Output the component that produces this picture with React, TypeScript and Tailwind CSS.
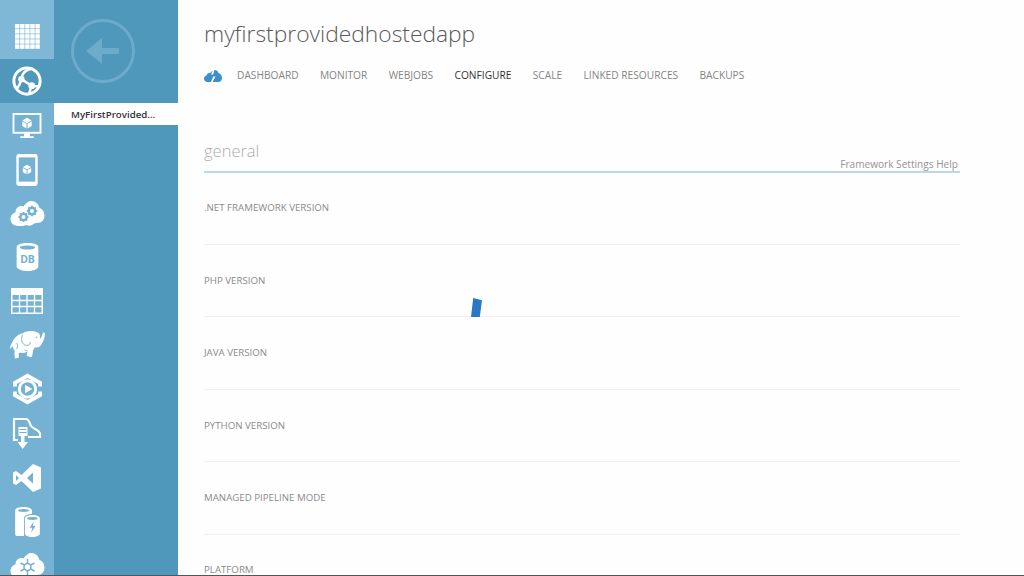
import React from "react";

const font = { fontFamily: '"Open Sans", "Noto Sans", sans-serif' };

const BLUE = "#74b1d2";

const Cube = ({ cx, cy, r, fill }: { cx: number; cy: number; r: number; fill: string }) => (
  <g>
    <path d={`M${cx} ${cy - r}L${cx + r * 0.87} ${cy - r * 0.5}L${cx} ${cy}L${cx - r * 0.87} ${cy - r * 0.5}Z`} fill={fill} />
    <path d={`M${cx - r * 0.87} ${cy - r * 0.32}L${cx - r * 0.1} ${cy + r * 0.12}V${cy + r}L${cx - r * 0.87} ${cy + r * 0.52}Z`} fill={fill} />
    <path d={`M${cx + r * 0.87} ${cy - r * 0.32}L${cx + r * 0.1} ${cy + r * 0.12}V${cy + r}L${cx + r * 0.87} ${cy + r * 0.52}Z`} fill={fill} />
  </g>
);

const GridIcon = () => (
  <svg width="25" height="25" viewBox="0 0 26 26" fill="#fff">
    {[0, 5.3, 10.6, 15.9, 21.2].flatMap((y) =>
      [0, 5.3, 10.6, 15.9, 21.2].map((x) => <rect key={`${x}-${y}`} x={x} y={y} width="4.6" height="4.6" />)
    )}
  </svg>
);

const GlobeIcon = () => (
  <svg width="30" height="30" viewBox="0 0 32 32" fill="none" stroke="#fff">
    <circle cx="16" cy="16" r="14" strokeWidth="3.2" />
    <path d="M21 3C15 4 11 8 10 13M10 14C9 18 8 22 4 25M10 14l11 7M21 21l9 1M21 21c-1 3-2 6-3 9" strokeWidth="2.6" />
    <circle cx="10" cy="14" r="3.4" fill="#fff" stroke="none" />
    <circle cx="21" cy="21" r="3.6" fill="#fff" stroke="none" />
  </svg>
);

const MonitorIcon = () => (
  <svg width="30" height="27" viewBox="0 0 30 28">
    <rect x="1" y="1" width="28" height="19.5" fill="none" stroke="#fff" strokeWidth="2" />
    <path d="M12 21h6v3h4v2H8v-2h4z" fill="#fff" />
    <Cube cx={15} cy={10.5} r={5.6} fill="#fff" />
  </svg>
);

const PhoneIcon = () => (
  <svg width="22" height="32" viewBox="0 0 22 33">
    <rect x="0" y="0" width="22" height="33" rx="2.5" fill="#fff" />
    <rect x="2.5" y="3.5" width="17" height="25" fill={BLUE} />
    <Cube cx={11} cy={16} r={5} fill="#fff" />
  </svg>
);

const CloudShape = ({ children, w, h }: { children?: React.ReactNode; w: number; h: number }) => (
  <svg width={w} height={h} viewBox="0 0 34 26">
    <path
      d="M8 25C3 25 0 22 0 18c0-3 2-6 5-6.500C5 7 9 4 13 5.500 15 2 18 0 21 0c4 0 7 3 8 7 3 1 5 4 5 7.500C34 19 31 22 27 22c-2 0-3 0-4 1-2 2-5 2-7 1-2 1-5 1-8 1z"
      fill="#fff"
    />
    {children}
  </svg>
);

const Gear = ({ cx, cy, r }: { cx: number; cy: number; r: number }) => (
  <g>
    <circle cx={cx} cy={cy} r={r * 0.68} fill="none" stroke={BLUE} strokeWidth={r * 0.5} />
    {[0, 45, 90, 135].map((a) => (
      <rect
        key={a}
        x={cx - r * 0.18}
        y={cy - r * 1.1}
        width={r * 0.36}
        height={r * 2.2}
        fill={BLUE}
        transform={`rotate(${a} ${cx} ${cy})`}
      />
    ))}
    <circle cx={cx} cy={cy} r={r * 0.42} fill="#fff" />
  </g>
);

const DbIcon = () => (
  <svg width="23" height="28" viewBox="0 0 24 31">
    <path d="M0 4.500C0 1.500 6 0 12 0s12 1.500 12 4.500V26c0 3-6 5-12 5S0 29 0 26z" fill="#fff" />
    <ellipse cx="12" cy="5" rx="8.500" ry="2.300" fill={BLUE} />
    <text x="12" y="22" textAnchor="middle" fontSize="11.5" fontWeight="700" fill={BLUE} fontFamily="Open Sans, sans-serif">
      DB
    </text>
  </svg>
);

const TableIcon = () => (
  <svg width="32" height="26" viewBox="0 0 32 26" fill="none" stroke="#fff">
    <rect x="0" y="0" width="32" height="7" fill="#fff" stroke="none" />
    <rect x="0.750" y="0.750" width="30.500" height="24.500" strokeWidth="1.500" />
    <path d="M1 12.500h30M1 18.500h30M8.500 7v18M16 7v18M23.500 7v18" strokeWidth="1.300" />
  </svg>
);

const ElephantIcon = () => (
  <svg width="35" height="30" viewBox="0 0 36 30">
    <path
      d="M2 13C4 8 8 4 13 3 17 0 24 0 28 2 31 3 31 6 31 9 32 8 33 5 34 2L36 3C36 8 34 13 31 16 29 18 27 18 26 17L24 20 23 25C23 27 22 28 20 27L17 26 18 22C14 24 11 23 9 23L9 28 5 29C5 26 4 23 5 21 3 19 3 17 3 16L0 19C0 16 1 15 2 13Z"
      fill="#fff"
    />
    <path d="M13 5C11 9 12 13 15 15 18 16 21 15 21 12M7 13c1 2 1 4 0 6M15 20c1 1 2 1 3 1" fill="none" stroke={BLUE} strokeWidth="1" />
    <circle cx="27" cy="7" r="0.800" fill={BLUE} />
  </svg>
);

const MediaIcon = () => (
  <svg width="29" height="32" viewBox="0 0 30 32">
    <path d="M15 0L30 8.500V23.500L15 32L0 23.500V8.500Z" fill="#fff" />
    <path d="M15 4.500L26 10.700V21.300L15 27.500L4 21.300V10.700Z" fill={BLUE} />
    <path d="M0 13.500h6v5H0zM24 13.500h6v5h-6z" fill={BLUE} />
    <circle cx="15" cy="16" r="8.500" fill="none" stroke="#fff" strokeWidth="3" />
    <path d="M12.500 11.500L20 16l-7.500 4.500z" fill="#fff" />
  </svg>
);

const DeployIcon = () => (
  <svg width="30" height="33" viewBox="0 0 30 33">
    <path d="M6 23H2V2H14C17 2 17.500 6 19 9 21 12 28 13 28 17V20H16" fill="none" stroke="#fff" strokeWidth="2.200" />
    <path d="M6.500 10h9v9h-3v6h3.500L10.700 32 5.500 25H9v-6H6.500z" fill="#fff" />
    <path d="M7.500 12.500h7M7.500 15.500h7" stroke={BLUE} strokeWidth="1" />
  </svg>
);

const VsIcon = () => (
  <svg width="28" height="28" viewBox="0 0 28 28">
    <path
      d="M20 0L28 3.500V24.500L20 28L8.500 17L3 21L0 19.500V8.500L3 7L8.500 11ZM20 8.500L14 14L20 19.500ZM3 11V17L6 14Z"
      fill="#fff"
      fillRule="evenodd"
    />
  </svg>
);

const CacheIcon = () => (
  <svg width="27" height="30" viewBox="0 0 28 34">
    <path d="M0 4c0-2.500 4-4 9.500-4S19 1.500 19 4v4c-5 0-9 2-9 5v20H3c-2 0-3-1-3-3z" fill="#fff" />
    <ellipse cx="9.500" cy="4" rx="6.500" ry="1.700" fill={BLUE} />
    <path d="M11 13c0-2.500 4-4 8.500-4S28 10.500 28 13v17c0 2.500-4 4-8.500 4S11 32.500 11 30z" fill="#fff" />
    <ellipse cx="19.500" cy="13" rx="6" ry="1.600" fill={BLUE} />
    <path d="M21 16.500l-4.500 7h3l-1.500 6 5-8h-3z" fill={BLUE} />
  </svg>
);

const HubIcon = () => (
  <CloudShape w={35} h={26}>
    <g stroke={BLUE} strokeWidth="1.500" fill="none">
      <circle cx="17" cy="14" r="3.500" />
      <path d="M17 6v4.500M17 17.500V22M10 10l4 2M24 10l-4 2M10 18l4-2M24 18l-4-2" />
    </g>
  </CloudShape>
);

const BackIcon = () => (
  <svg width="66" height="66" viewBox="0 0 66 66" fill="none">
    <circle cx="33" cy="33" r="30.500" stroke="#6dabcc" strokeWidth="3" />
    <path d="M16 33L32 20V30H49V36H32V46Z" fill="#6dabcc" />
  </svg>
);

const StatusCloud = () => (
  <svg width="18" height="12" viewBox="0 0 18 12">
    <path
      d="M3.500 12C1.500 12 0 10.500 0 8.700 0 7 1 5.800 2.500 5.500 3 3.500 4.500 2.500 6.500 2.700L9 0l-2 4.500h3L7 12zM10.500 0c2 0 3.500 1.200 4 3C16.500 3.500 18 5.500 18 8c0 2.500-1.500 4-4 4H8.500L11.500 6.500h-3z"
      fill="#3d8fcb"
    />
  </svg>
);

const rail: [React.ReactNode, string][] = [
  [<MonitorIcon />, "pt-[2px]"],
  [<PhoneIcon />, "pt-[1px]"],
  [
    <CloudShape w={35} h={26}>
      <Gear cx={13} cy={16} r={4.6} />
      <Gear cx={21.500} cy={10} r={4.8} />
    </CloudShape>,
    "pt-[2px]",
  ],
  [<DbIcon />, ""],
  [<TableIcon />, ""],
  [<ElephantIcon />, ""],
  [<MediaIcon />, ""],
  [<DeployIcon />, ""],
  [<VsIcon />, "pt-[2px]"],
  [<CacheIcon />, "pt-[2px]"],
  [<HubIcon />, "pt-[2px]"],
];

const tabs = [
  ["DASHBOARD", false],
  ["MONITOR", false],
  ["WEBJOBS", false],
  ["CONFIGURE", true],
  ["SCALE", false],
  ["LINKED RESOURCES", false],
  ["BACKUPS", false],
] as const;

const rows = [
  ".NET FRAMEWORK VERSION",
  "PHP VERSION",
  "JAVA VERSION",
  "PYTHON VERSION",
  "MANAGED PIPELINE MODE",
];

export default function App() {
  return (
    <div style={font} className="relative flex h-[576px] w-[1024px] overflow-hidden bg-[#fefefe]">
      <nav className="flex w-[54px] shrink-0 flex-col items-stretch overflow-hidden bg-[#74b1d2]">
        <div className="flex h-[59px] shrink-0 items-end justify-center bg-[#7fb8d7] pb-[10px]">
          <GridIcon />
        </div>
        <div className="flex h-[44px] shrink-0 items-center justify-center bg-[#5097bc]">
          <GlobeIcon />
        </div>
        {rail.map(([icon, cls], i) => (
          <div key={i} className={`flex h-[44px] shrink-0 items-center justify-center ${cls}`}>
            {icon}
          </div>
        ))}
      </nav>

      <aside className="flex w-[124px] shrink-0 flex-col bg-[#5097bc]">
        <div className="flex h-[103px] shrink-0 items-start pl-[16px] pt-[18px]">
          <BackIcon />
        </div>
        <div className="flex h-[22px] items-center bg-white pl-[17px] pt-[2px] text-[9.700px] font-semibold text-[#333]">
          MyFirstProvided...
        </div>
      </aside>

      <main className="min-w-0 flex-1 pl-[26px]">
        <h1 className="mt-[17px] h-[34px] text-[22.800px] leading-[34px] font-light text-[#5a5a5a]">
          myfirstprovidedhostedapp
        </h1>
        <div className="mt-[16px] flex h-[18px] items-center text-[10.200px] text-[#858585]">
          <span className="mr-[15px] flex">
            <StatusCloud />
          </span>
          <div className="flex gap-[21.350px]">
            {tabs.map(([t, active]) => (
              <span key={t} className={active ? "text-[#333]" : ""}>
                {t}
              </span>
            ))}
          </div>
        </div>

        <section className="mt-[55px] w-[756px]">
          <div className="-mb-[1px] flex h-[33px] items-start justify-between border-b-2 border-[#bcd9ec]">
            <span className="-mt-[1px] text-[16.500px] leading-[24px] font-light text-[#adadad]">general</span>
            <span className="mt-[16px] mr-[2px] text-[10.100px] leading-[16px] text-[#949494]">Framework Settings Help</span>
          </div>
          {rows.map((r) => (
            <div key={r} className="h-[72.500px] border-b border-[#f0f0f0] pt-[28px] text-[9.700px] leading-[16px] text-[#8a8a8a]">
              {r}
            </div>
          ))}
          <div className="pt-[27px] text-[9.700px] leading-[16px] text-[#8a8a8a]">PLATFORM</div>
        </section>
      </main>

      <div className="absolute top-[298px] left-[471px] h-[19px] w-[11px] bg-[#2b78c2] [clip-path:polygon(20%_0,100%_12%,80%_100%,0_100%)]" />
      <div className="absolute bottom-0 left-0 h-[1px] w-full bg-[#555]" />
    </div>
  );
}
